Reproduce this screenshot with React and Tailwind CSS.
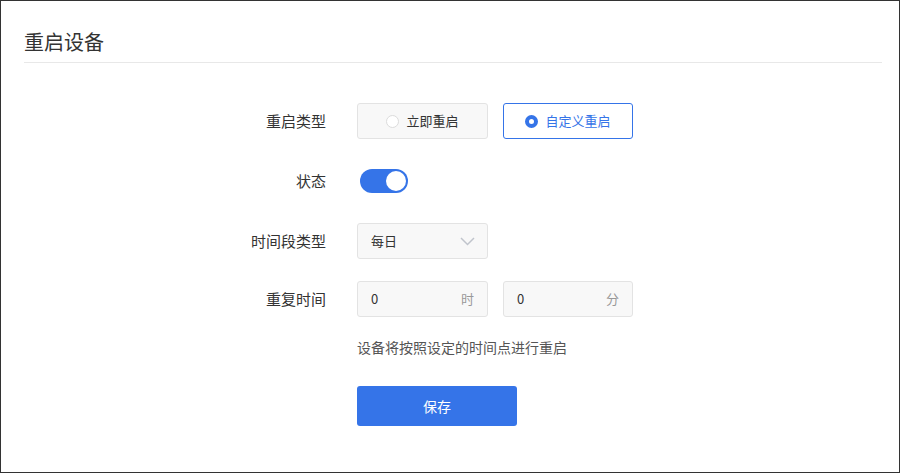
import { useState } from "react"

const font = { fontFamily: '"Noto Sans CJK SC", "Noto Sans", sans-serif' }

function Row({ label, children, className = "" }) {
  return (
    <div className={"flex items-center " + className}>
      <div className="w-[325px] text-right text-[15px] text-[#333]">{label}</div>
      <div className="ml-[31px] flex items-center gap-[15px]">{children}</div>
    </div>
  )
}

function Radio({ checked, label, onClick }) {
  return (
    <button
      type="button"
      onClick={onClick}
      className={
        "flex h-[36px] items-center justify-center gap-[7px] rounded-[3px] border text-[13px] " +
        (checked
          ? "w-[130px] border-[#3574e8] bg-white text-[#3574e8]"
          : "w-[131px] border-[#e3e3e3] bg-[#f8f8f8] text-[#333]")
      }
    >
      {checked ? (
        <span className="h-[13px] w-[13px] rounded-full border-[4px] border-[#3574e8] bg-white" />
      ) : (
        <span className="h-[13px] w-[13px] rounded-full border border-[#dcdcdc] bg-white" />
      )}
      {label}
    </button>
  )
}

export default function App() {
  const [type, setType] = useState("custom")
  const [on, setOn] = useState(true)

  return (
    <div style={font} className="h-[473px] w-[900px] border border-[#333] bg-white">
      {/* Header */}
      <div className="ml-[23px] mr-[17px] h-[62px] border-b border-[#e8e8e8] pt-[27px]">
        <h1 className="text-[20px] leading-[28px] text-[#333]">重启设备</h1>
      </div>

      {/* Form */}
      <div className="pt-[40px]">
        <Row label="重启类型">
          <Radio checked={type === "now"} label="立即重启" onClick={() => setType("now")} />
          <Radio checked={type === "custom"} label="自定义重启" onClick={() => setType("custom")} />
        </Row>

        <Row label="状态" className="mt-[24px] h-[36px]">
          <button
            type="button"
            onClick={() => setOn(!on)}
            className={
              "ml-[3px] flex h-[24px] w-[48px] items-center rounded-full px-[2px] " +
              (on ? "justify-end bg-[#3574e8]" : "justify-start bg-[#ccc]")
            }
          >
            <span className="h-[20px] w-[20px] rounded-full bg-white" />
          </button>
        </Row>

        <Row label="时间段类型" className="mt-[24px]">
          <div className="flex h-[36px] w-[131px] items-center justify-between rounded-[3px] border border-[#e3e3e3] bg-[#f8f8f8] pl-[13px] pr-[12px] text-[13px] text-[#333]">
            <span>每日</span>
            <svg width="15" height="9" viewBox="0 0 15 9" fill="none">
              <path d="M1 1l6.5 6.5L14 1" stroke="#c0c4cc" strokeWidth="1.5" />
            </svg>
          </div>
        </Row>

        <Row label="重复时间" className="mt-[22px]">
          <div className="flex h-[36px] w-[131px] items-center justify-between rounded-[3px] border border-[#e3e3e3] bg-[#f8f8f8] pl-[13px] pr-[13px] text-[13px]">
            <span className="text-[#333]">0</span>
            <span className="text-[#999]">时</span>
          </div>
          <div className="flex h-[36px] w-[130px] items-center justify-between rounded-[3px] border border-[#e3e3e3] bg-[#f8f8f8] pl-[13px] pr-[13px] text-[13px]">
            <span className="text-[#333]">0</span>
            <span className="text-[#999]">分</span>
          </div>
        </Row>

        <div className="ml-[356px]">
          <p className="mt-[20px] text-[14px] leading-[20px] text-[#555]">设备将按照设定的时间点进行重启</p>
          <button
            type="button"
            className="mt-[29px] h-[40px] w-[160px] rounded-[3px] bg-[#3574e8] text-[14px] text-white"
          >
            保存
          </button>
        </div>
      </div>
    </div>
  )
}
